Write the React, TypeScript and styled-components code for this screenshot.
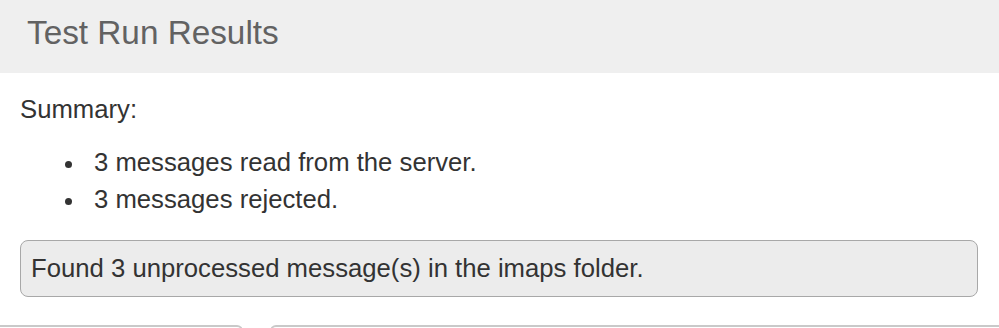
import React from "react";
import styled, { createGlobalStyle } from "styled-components";

const GlobalStyle = createGlobalStyle`
  html, body {
    margin: 0;
    padding: 0;
    background: #ffffff;
    overflow: hidden;
  }
  body {
    font-family: "Liberation Sans", Arial, Helvetica, sans-serif;
    color: #333333;
  }
`;

const Page = styled.div`
  width: 999px;
  height: 328px;
  overflow: hidden;
  background: #ffffff;
`;

const Header = styled.header`
  height: 73px;
  background: #efefef;
  display: flex;
  align-items: center;
  padding: 0 27px;
  box-sizing: border-box;
`;

const Title = styled.h1`
  margin: 0 0 6px 0;
  font-size: 33.3px;
  font-weight: 400;
  color: #626262;
  line-height: 1.15;
`;

const Body = styled.section`
  padding: 18px 21px 0 20px;
  font-size: 25.7px;
  line-height: 37.5px;
`;

const SummaryLabel = styled.p`
  margin: 0;
  color: #333333;
`;

const Results = styled.ul`
  margin: 15px 0 0 0;
  padding: 0 0 0 74px;
  list-style: none;
  color: #333333;
`;

const Item = styled.li`
  position: relative;

  &::before {
    content: "";
    position: absolute;
    left: -29px;
    top: 17px;
    width: 7px;
    height: 7px;
    border-radius: 50%;
    background: #333333;
  }
`;

const Notice = styled.div`
  margin-top: 21px;
  background: #ececec;
  border: 1.5px solid #a8a8a8;
  border-radius: 8px;
  padding: 9px 10px;
  color: #333333;
`;

const Footer = styled.div`
  display: flex;
  gap: 27px;
  margin: 28px -40px 0 -30px;
`;

const Tab = styled.div<{ $width?: number }>`
  ${({ $width }) => ($width ? `width: ${$width}px;` : "flex: 1;")}
  height: 40px;
  border: 2px solid #c9c9c9;
  border-radius: 6px 6px 0 0;
  box-sizing: border-box;
  background: #ffffff;
`;

const App: React.FC = () => (
  <Page>
    <GlobalStyle />
    <Header>
      <Title>Test Run Results</Title>
    </Header>
    <Body>
      <SummaryLabel>Summary:</SummaryLabel>
      <Results>
        <Item>3 messages read from the server.</Item>
        <Item>3 messages rejected.</Item>
      </Results>
      <Notice>Found 3 unprocessed message(s) in the imaps folder.</Notice>
      <Footer>
        <Tab $width={253} />
        <Tab />
      </Footer>
    </Body>
  </Page>
);

export default App;
